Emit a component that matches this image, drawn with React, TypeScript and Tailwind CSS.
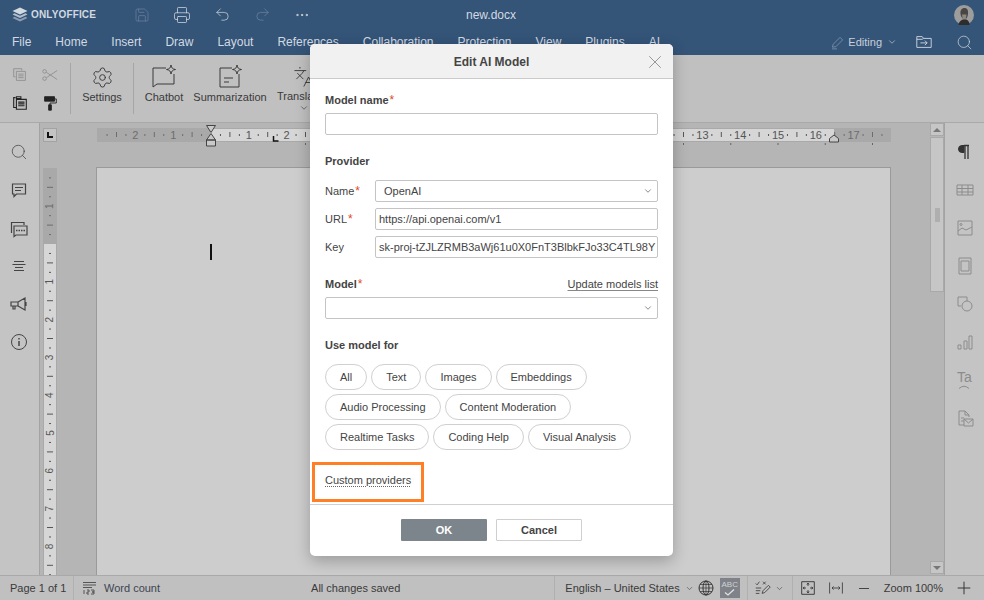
import { ChevronDown, Ellipsis, Languages, Printer, Redo2, Save, Search, Settings, Undo2, X } from 'lucide-react'
import type { ReactNode } from 'react'

const tabs = ['File', 'Home', 'Insert', 'Draw', 'Layout', 'References', 'Collaboration', 'Protection', 'View', 'Plugins', 'AI']

const Icon = ({ size = 20, className = '', children }: { size?: number; className?: string; children: ReactNode }) => (
  <svg width={size} height={size} viewBox="0 0 20 20" fill="none" stroke="currentColor" strokeWidth="1" className={className}>
    {children}
  </svg>
)

const Logo = () => (
  <svg width="16" height="15" viewBox="0 0 16 15" className="text-[#d3d9e1]">
    <path d="M8 0.5 15.5 4 8 7.5 0.5 4Z" fill="currentColor" />
    <path d="M2.5 6.2 8 8.8 13.5 6.2 15.5 7.5 8 11 0.5 7.5Z" fill="currentColor" opacity="0.8" />
    <path d="M2.5 9.7 8 12.3 13.5 9.7 15.5 11 8 14.5 0.5 11Z" fill="currentColor" opacity="0.55" />
  </svg>
)

const Avatar = () => (
  <svg width="20" height="20" viewBox="0 0 20 20">
    <circle cx="10" cy="10" r="10" fill="#9d9d9d" />
    <path d="M6.5 9c-.5-4 1.5-6 4-6s4 2 3.500 6c-.3 3-1.500 5-3 5.500-1.800 0-4.200-2.500-4.500-5.500Z" fill="#4a4644" />
    <path d="M8 9.5h4.500l-.5 4-1.800 1.500L8.500 13.500Z" fill="#8d8782" />
    <path d="M4.500 20c.5-4 3-5 4.500-5.500h3c2 .5 3.500 2 3.500 5.500Z" fill="#2f2d2c" />
  </svg>
)

const Sep = () => <div className="my-2 w-px self-stretch bg-[#a6a6a6]" />

const LargeTool = ({ label, icon, className = '' }: { label: string; icon: ReactNode; className?: string }) => (
  <div className={'flex flex-col items-center ' + className}>
    <div className="flex h-[26px] items-center justify-center">{icon}</div>
    <span className="leading-[14px]">{label}</span>
  </div>
)

const HRuler = () => {
  const origin = 114
  const unit = 37.8
  const marks = []
  for (let i = -12; i < 76; i++) {
    const x = origin + (i * unit) / 4
    if (x < 6 || x > 790) continue
    if (i === 0) continue
    const inside = x > 113 && x < 737
    const fill = inside ? '#555' : '#6d6d6d'
    if (i % 4 === 0) {
      marks.push(
        <text key={i} x={x} y={15} textAnchor="middle" fontSize="11" fill={fill} fontFamily="Liberation Sans">
          {Math.abs(i / 4)}
        </text>
      )
    } else if (Math.abs(i % 4) === 2) {
      marks.push(<rect key={i} x={x - 0.5} y={8} width={1} height={5} fill={fill} />)
    } else {
      marks.push(<rect key={i} x={x - 0.5} y={10} width={1} height={2} fill={fill} />)
    }
  }
  const stops = []
  for (let k = 2; k < 15; k++) {
    stops.push(<rect key={k} x={origin + k * 47.25 - 0.5} y={19} width={1} height={2} fill="#666" />)
  }
  return (
    <svg width="796" height="24" viewBox="0 0 796 24" className="overflow-visible">
      <rect x="0" y="4" width="794" height="14" fill="#a9a9a9" />
      <rect x="113" y="5" width="624" height="12" fill="#d6d6d6" />
      {marks}
      {stops}
      <path d="M109.5 1.5h9l-4.500 7Zm0 14.500 4.500-6.500 4.500 6.500Zm0 0h9v6h-9Z" fill="#c9c9c9" stroke="#444" strokeWidth="1" />
      <path d="M176.5 12v5h5" stroke="#111" strokeWidth="1.5" fill="none" />
      <path d="M732.5 18v-3.5l4.500-3.500 4.500 3.500V18Z" fill="#c9c9c9" stroke="#444" strokeWidth="1" />
    </svg>
  )
}

const VRuler = () => {
  const origin = 76
  const unit = 37.8
  const marks = []
  for (let i = -7; i < 36; i++) {
    const y = origin + (i * unit) / 4
    if (i === 0) continue
    const fill = y > 76 ? '#555' : '#6d6d6d'
    if (i % 4 === 0) {
      marks.push(
        <text key={i} x={7} y={y + 3.5} textAnchor="middle" fontSize="10" fill={fill} fontFamily="Liberation Sans" transform={'rotate(-90 7 ' + y + ')'}>
          {Math.abs(i / 4)}
        </text>
      )
    } else if (Math.abs(i % 4) === 2) {
      marks.push(<rect key={i} x={4} y={y - 0.5} width={6} height={1} fill={fill} />)
    } else {
      marks.push(<rect key={i} x={6} y={y - 0.5} width={2} height={1} fill={fill} />)
    }
  }
  return (
    <svg width="14" height="407" viewBox="0 0 14 407">
      <rect x="0" y="0" width="14" height="407" fill="#a9a9a9" />
      <rect x="1" y="76" width="12" height="331" fill="#d6d6d6" />
      {marks}
    </svg>
  )
}

const Req = () => <span className="ml-[1px] text-[12px] font-normal leading-none text-[#e0492a]">*</span>

const Field = ({ children }: { children?: ReactNode }) => (
  <div className="flex h-[22px] w-full items-center overflow-hidden whitespace-nowrap rounded-[2px] border border-[#c4c4c4] bg-white px-[3px]">
    {children}
  </div>
)

const Drop = ({ value }: { value?: string }) => (
  <div className="flex h-[22px] w-full items-center justify-between rounded-[2px] border border-[#c4c4c4] bg-white pl-[8px] pr-[4px]">
    <span>{value}</span>
    <ChevronDown size={10} strokeWidth={1.5} />
  </div>
)

const Chip = ({ label }: { label: string }) => (
  <span className="flex h-[26px] items-center rounded-[13px] border border-[#d0d0d0] bg-white px-[14px]">{label}</span>
)

const chips = ['All', 'Text', 'Images', 'Embeddings', 'Audio Processing', 'Content Moderation', 'Realtime Tasks', 'Coding Help', 'Visual Analysis']

const Dialog = () => (
  <div className="absolute left-[310px] top-[44px] flex h-[512px] w-[363px] flex-col overflow-hidden rounded-[5px] bg-white text-[11px] text-[#444] shadow-[0_5px_15px_rgba(0,0,0,0.25)]">
    <div className="flex h-[35px] shrink-0 items-center justify-center border-b border-[#cbcbcb] bg-[#f1f1f1] pt-px text-[12px] font-bold">
      Edit AI Model
    </div>
    <button className="absolute right-[7px] top-[7px] text-[#777]">
      <X size={22} strokeWidth={0.8} />
    </button>
    <div className="flex-1 px-[15px] pt-[13px]">
      <div className="mb-[5px] h-[16px] font-bold leading-[16px]">Model name<Req /></div>
      <Field />
      <div className="mb-[11px] mt-[18px] h-[16px] font-bold leading-[16px]">Provider</div>
      <div className="flex flex-col gap-[6px]">
        <div className="flex items-center">
          <span className="w-[50px] shrink-0">Name<Req /></span>
          <Drop value="OpenAI" />
        </div>
        <div className="flex items-center">
          <span className="w-[50px] shrink-0">URL<Req /></span>
          <Field>https://api.openai.com/v1</Field>
        </div>
        <div className="flex items-center">
          <span className="w-[50px] shrink-0">Key</span>
          <Field>sk-proj-tZJLZRMB3aWj61u0X0FnT3BlbkFJo33C4TL98Y</Field>
        </div>
      </div>
      <div className="mb-[5px] mt-[18px] flex h-[16px] items-center justify-between leading-[16px]">
        <span className="font-bold">Model<Req /></span>
        <span className="underline decoration-[#888] underline-offset-2">Update models list</span>
      </div>
      <Drop />
      <div className="mb-[11px] mt-[18px] h-[16px] font-bold leading-[16px]">Use model for</div>
      <div className="flex flex-wrap gap-x-[4px] gap-y-[4px]">
        {chips.map((c) => (
          <Chip key={c} label={c} />
        ))}
      </div>
      <div className="mt-[22px] h-[16px] leading-[16px]">
        <span className="underline decoration-dotted decoration-[#666] underline-offset-2">Custom providers</span>
      </div>
    </div>
    <div className="flex h-[52px] shrink-0 justify-center gap-[9px] border-t border-[#d0d0d0] pt-[14px] text-[11px] font-bold">
      <button className="h-[22px] w-[86px] rounded-[1px] bg-[#7d858c] text-white">OK</button>
      <button className="h-[22px] w-[86px] rounded-[1px] border border-[#cfcfcf] bg-white">Cancel</button>
    </div>
  </div>
)

export default function App() {
  return (
    <div className="relative flex h-[600px] w-[984px] flex-col overflow-hidden bg-[#c0c0c0] font-['Liberation_Sans',Arial,sans-serif] text-[11px] text-[#3a3a3a]">
      {/* header */}
      <div className="flex h-[30px] shrink-0 items-center bg-[#345478] pb-px text-[#d3d9e1]">
        <div className="flex w-[121px] items-center pl-[12px]">
          <Logo />
          <span className="ml-[3px] text-[10px] font-bold tracking-[0.15px]">ONLYOFFICE</span>
        </div>
        <div className="flex w-[41px] justify-center text-[#6f86a3]"><Save size={16} strokeWidth={1} /></div>
        <div className="flex w-[40px] justify-center"><Printer size={18} strokeWidth={1} /></div>
        <div className="flex w-[40px] justify-center"><Undo2 size={17} strokeWidth={1} /></div>
        <div className="flex w-[40px] justify-center text-[#6f86a3]"><Redo2 size={17} strokeWidth={1} /></div>
        <div className="flex w-[40px] justify-center"><Ellipsis size={16} strokeWidth={1.5} /></div>
        <span className="ml-[144px] text-[12px]">new.docx</span>
        <div className="ml-auto pr-[10px]"><Avatar /></div>
      </div>
      <div className="flex h-[25px] shrink-0 items-start justify-between bg-[#345478] text-[12px] leading-[24px] text-[#d3d9e1]">
        <div className="flex gap-[24px] pl-[12px]">
          {tabs.map((t) => (
            <span key={t}>{t}</span>
          ))}
        </div>
        <div className="flex items-center pr-[11px]">
          <Icon size={17} className="text-[#7e93ad]">
            <path d="M4 15.5 5 12 13 4l3 3-8 8ZM3.5 17.5h6" />
          </Icon>
          <span className="ml-[2px] text-[11px] text-[#c9d0da]">Editing</span>
          <ChevronDown size={10} strokeWidth={1.5} className="ml-[5px]" />
          <Icon size={18} className="ml-[18px]">
            <path d="M2 16V4h6l1.5 2H18v10ZM2 7h6l1.5-1M6 11h7.5M11 8.5l2.500 2.500-2.500 2.500" />
          </Icon>
          <Search size={17} strokeWidth={1} className="ml-[23px]" />
        </div>
      </div>

      {/* toolbar */}
      <div className="flex h-[68px] shrink-0 border-b border-[#a9a9a9] bg-[#c0c0c0]">
        <div className="grid w-[70px] grid-cols-2 content-start justify-items-center pl-[5px] pr-[5px] pt-[11px]">
          <Icon size={18} className="mb-[10px] text-[#8e8e8e]">
            <path d="M3 3h9v2M3 3v9h2M6 6h10v10H6ZM8 9h6M8 11h6M8 13h6" />
          </Icon>
          <Icon size={18} className="mb-[10px] text-[#8e8e8e]">
            <circle cx="4" cy="6" r="2" />
            <circle cx="4" cy="14" r="2" />
            <path d="M6 7 18 15M6 13 18 5" />
          </Icon>
          <Icon size={18} className="text-[#222]">
            <path d="M5 4H3v11h3M6 3h5v2H6ZM6 6h11v11H6ZM8 9h7M8 11h7M8 13h7" strokeWidth="1.2" />
          </Icon>
          <Icon size={18} className="text-[#222]">
            <path d="M4 3h11v5H4Z" fill="currentColor" />
            <path d="M15 5.5h2V10H10v2" />
            <path d="M8.5 12h3v6h-3Z" fill="currentColor" />
          </Icon>
        </div>
        <Sep />
        <LargeTool className="w-[62px] pt-[9px]" label="Settings" icon={<Settings size={23} strokeWidth={1} />} />
        <Sep />
        <LargeTool
          className="ml-[7px] w-[46px] pt-[9px]"
          label="Chatbot"
          icon={
            <svg width="26" height="26" viewBox="0 0 26 26" fill="none" stroke="currentColor" strokeWidth="1">
              <path d="M15 4H2v19l4-3h17V10" />
              <path d="M20 1c.5 3 1.5 4 4.5 4.5-3 .5-4 1.5-4.5 4.5-.5-3-1.5-4-4.5-4.5 3-.5 4-1.5 4.5-4.5Z" />
            </svg>
          }
        />
        <LargeTool
          className="ml-[6px] w-[74px] pt-[9px]"
          label="Summarization"
          icon={
            <svg width="26" height="26" viewBox="0 0 26 26" fill="none" stroke="currentColor" strokeWidth="1">
              <path d="M15 4H3v19h19V10M7 14h9M7 18h5" />
              <path d="M20 1c.5 3 1.5 4 4.5 4.5-3 .5-4 1.5-4.5 4.5-.5-3-1.5-4-4.5-4.5 3-.5 4-1.5 4.5-4.5Z" />
            </svg>
          }
        />
        <div className="ml-[9px] flex w-[56px] flex-col items-center pt-[9px]">
          <div className="flex h-[25px] items-center"><Languages size={22} strokeWidth={1} /></div>
          <span className="leading-[14px]">Translation</span>
          <ChevronDown size={10} strokeWidth={1.5} />
        </div>
      </div>

      {/* work area */}
      <div className="flex min-h-0 flex-1">
        <div className="flex w-[40px] shrink-0 flex-col items-center gap-[18px] border-r border-[#a3a3a3] bg-[#c4c4c4] pr-[1px] pt-[19px] text-[#444]">
          <div className="flex h-[20px] items-center"><Search size={18} strokeWidth={1} /></div>
          <Icon>
            <path d="M3.5 4h13v10H7.500L5 16.500V14H3.500ZM6 7.500h8M6 10.500h6" strokeWidth="1.2" />
          </Icon>
          <Icon>
            <path d="M2.500 15V4.500H15V7M5 8h13v9H7l-2 1.500Z" strokeWidth="1.2" />
            <path d="M7 12.500h9" strokeWidth="1.5" strokeDasharray="1.500 1" />
          </Icon>
          <Icon>
            <path d="M5 5.500h10M3.500 8.500h13M6 11.500h8M5 14.500h10" />
          </Icon>
          <Icon>
            <path d="M2 8h7v4H2ZM4 12v3h2v-3M9 8l7-4v12l-7-4M17 8v4" strokeWidth="1.2" />
          </Icon>
          <Icon>
            <circle cx="10" cy="10" r="7.5" />
            <path d="M10 9v5M10 6v1.5" strokeWidth="1.5" />
          </Icon>
        </div>

        <div className="flex min-w-0 flex-1 bg-[#b5b5b5]">
          <div className="flex w-[890px] shrink-0 flex-col">
            <div className="flex h-[44px] shrink-0 items-start pl-[3px]">
              <div className="mt-[5px] flex h-[14px] w-[14px] items-center justify-center border border-[#a3a3a3] bg-[#c4c4c4]">
                <span className="block h-[6px] w-[6px] border-b-2 border-l-2 border-[#111]" />
              </div>
              <div className="ml-[40px] mt-[1px]">
                <HRuler />
              </div>
            </div>
            <div className="flex min-h-0 flex-1 overflow-hidden pl-[3px]">
              <div className="mt-px shrink-0"><VRuler /></div>
              <div className="ml-[39px] w-[795px] shrink-0 border-l border-r border-t border-[#9a9a9a] bg-[#cdcdcd] pl-[113px] pt-[76px]">
                <div className="h-[16px] w-[2px] bg-[#111]" />
              </div>
            </div>
          </div>
          <div className="flex w-[14px] shrink-0 flex-col">
            <div className="flex h-[13px] items-center justify-center border border-[#a9a9a9] bg-[#c6c6c6]">
              <span className="h-0 w-0 border-x-[4px] border-b-[4px] border-x-transparent border-b-[#777]" />
            </div>
            <div className="mt-[1px] flex h-[155px] items-center justify-center border border-[#a9a9a9] bg-[#c6c6c6]">
              <span className="h-[14px] w-[5px] bg-[#afafaf]" />
            </div>
            <div className="flex-1" />
            <div className="mb-px flex h-[13px] items-center justify-center border border-[#a9a9a9] bg-[#c6c6c6]">
              <span className="h-0 w-0 border-x-[4px] border-t-[4px] border-x-transparent border-t-[#777]" />
            </div>
          </div>
        </div>

        <div className="flex w-[40px] shrink-0 flex-col items-center gap-[18px] border-l border-[#a3a3a3] bg-[#c4c4c4] pt-[19px] text-[#8c8c8c]">
          <Icon className="text-[#333]">
            <path d="M9 3.5h-2a3.5 3.5 0 0 0 0 7h2Z" fill="currentColor" />
            <path d="M9 3.5h5M10 3.5V17M13 3.5V17" strokeWidth="1.3" />
          </Icon>
          <Icon>
            <path d="M2 5h16v10H2ZM2 8.500h16M2 12h16M7 5v10M13 5v10" />
          </Icon>
          <Icon>
            <path d="M3 3h14v14H3ZM3 13l4-3 4 2 6-3" />
            <circle cx="6" cy="6.5" r="1" />
          </Icon>
          <Icon>
            <path d="M4 2h12v16H4ZM6 5h8M6 15h8M6 5v10M14 5v10" />
          </Icon>
          <Icon>
            <path d="M3 3h9v4M3 3v9h3" />
            <circle cx="12" cy="12" r="5" />
          </Icon>
          <Icon>
            <path d="M3 13h3v4H3ZM9 9h3v8H9ZM14 4h3v13h-3Z" />
          </Icon>
          <div className="flex h-[20px] flex-col items-center leading-none">
            <span className="text-[14px] leading-[15px]">Ta</span>
            <svg width="12" height="4" viewBox="0 0 12 4" fill="none" stroke="currentColor"><path d="M1 3.5Q6-1 11 3.5" /></svg>
          </div>
          <Icon>
            <path d="M9 17H4V3h6l4 4v2M10 3v4h4M6 10h3M6 13h3" />
            <path d="M9 11h9v7H9ZM9 11l4.500 4 4.500-4" />
          </Icon>
        </div>
      </div>

      {/* status bar */}
      <div className="flex h-[25px] shrink-0 items-center border-t border-[#a9a9a9] bg-[#c0c0c0]">
        <span className="w-[73px] pl-[10px]">Page 1 of 1</span>
        <div className="h-full w-px bg-[#b0b0b0]" />
        <svg width="14" height="14" viewBox="0 0 14 14" className="ml-[9px] text-[#555]" fill="none" stroke="currentColor">
          <path d="M0 1.5h13M0 4h13M0 6.5h9" />
          <path d="M1 9v4M4 9h2v2H4v2h2M8 9h3v2H9h2v2H8" strokeWidth="1" />
        </svg>
        <span className="ml-[7px] text-[#3d4550]">Word count</span>
        <span className="ml-[151px]">All changes saved</span>
        <div className="ml-[154px] h-full w-px bg-[#b0b0b0]" />
        <span className="ml-[10px]">English – United States</span>
        <ChevronDown size={9} strokeWidth={1.5} className="ml-[5px]" />
        <svg width="16" height="16" viewBox="0 0 16 16" fill="none" stroke="#333" className="ml-[4px]">
          <circle cx="8" cy="8" r="7" />
          <ellipse cx="8" cy="8" rx="3" ry="7" />
          <path d="M1 8h14M8 1v14M2 4.5h12M2 11.5h12" strokeWidth="0.7" />
        </svg>
        <div className="ml-[6px] flex h-[20px] w-[20px] flex-col items-center justify-center bg-[#7f8288] text-[8px] leading-[8px] text-[#cfd2d6]">
          <span>ABC</span>
          <svg width="11" height="7" viewBox="0 0 11 7" fill="none" stroke="#e2e2e2" strokeWidth="1.3"><path d="M1 3.5 4 6l6-5.500" /></svg>
        </div>
        <div className="ml-[7px] h-full w-px bg-[#b0b0b0]" />
        <Icon size={18} className="ml-[6px] text-[#444]">
          <path d="M2 5l1.5 1.5L6 3M10 3l3 3M13 3l-3 3M2 10h6M2 13h5M2 16h4M9 16l1-3 6-6 2 2-6 6Z" />
        </Icon>
        <ChevronDown size={9} strokeWidth={1.5} className="ml-[3px]" />
        <div className="ml-[8px] h-full w-px bg-[#b0b0b0]" />
        <Icon size={14} className="ml-[8px] text-[#333]">
          <path d="M1 1h18v18H1ZM10 3v4M8.5 5 10 3l1.5 2M10 17v-4M8.5 15l1.5 2 1.5-2M3 10h4M5 8.5 3 10l2 1.5M17 10h-4M15 8.5l2 1.5-2 1.5" strokeWidth="1.3" />
        </Icon>
        <Icon size={16} className="ml-[13px] text-[#333]">
          <path d="M2 3v14M18 3v14M5 10h10M7 8l-2 2 2 2M13 8l2 2-2 2" />
        </Icon>
        <div className="ml-[15px] h-px w-[10px] bg-[#444]" />
        <span className="ml-[15px]">Zoom 100%</span>
        <Icon size={14} className="ml-[14px] text-[#333]">
          <path d="M10 1v18M1 10h18" strokeWidth="1.4" />
        </Icon>
      </div>

      <Dialog />

      {/* orange callout */}
      <div className="absolute left-[312px] top-[462px] h-[40px] w-[112px] border-[3px] border-[#ff7f27]" />
    </div>
  )
}
